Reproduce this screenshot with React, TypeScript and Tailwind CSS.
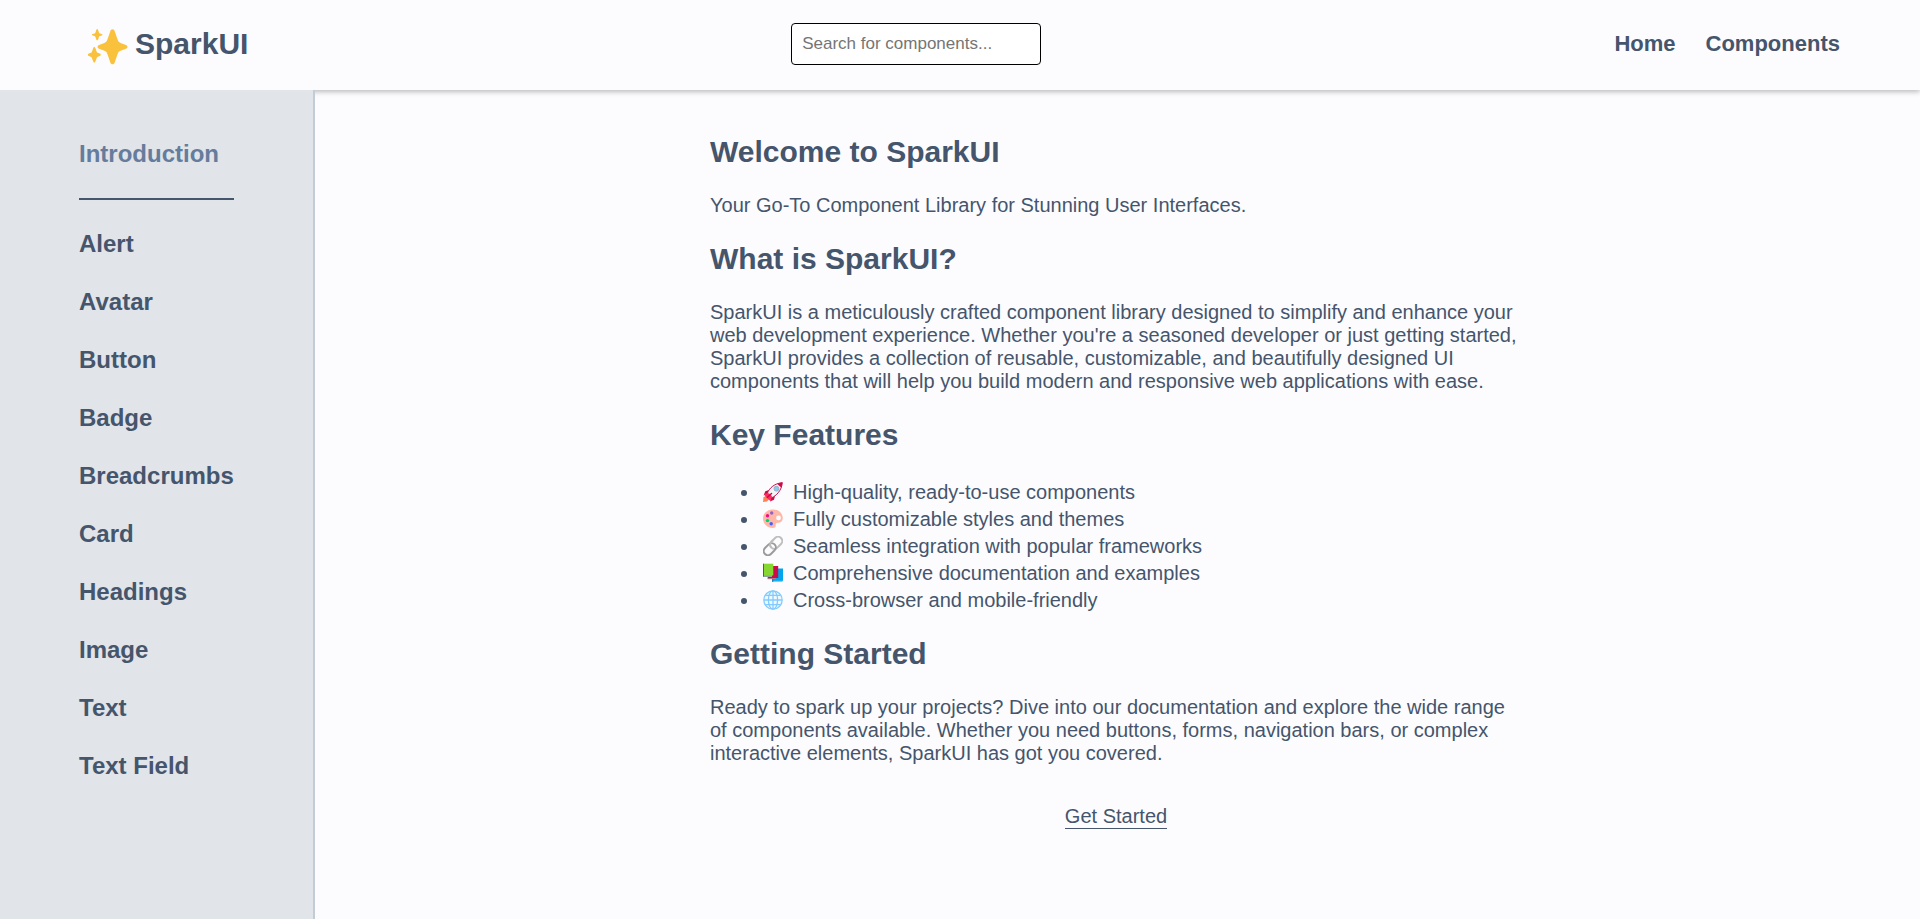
import React from "react";

const components = [
  "Alert",
  "Avatar",
  "Button",
  "Badge",
  "Breadcrumbs",
  "Card",
  "Headings",
  "Image",
  "Text",
  "Text Field",
];

function Sparkles() {
  return (
    <svg className="mt-1.5 h-9 w-10" viewBox="0 0 40 36" fill="#fac23c" aria-hidden="true">
      <path d="M24.5 0.3C25.6 0.3 26.3 1 26.7 2.2L29.6 10.6C30.3 12.6 31 13.3 32.6 13.9L38 15.9C40 16.7 40 19 38 19.7L32.6 21.7C31 22.3 30.3 23 29.6 25L26.7 33.4C26 35.8 23 35.8 22.3 33.4L19.4 25C18.7 23 18 22.3 16.4 21.7L11 19.7C9 19 9 16.7 11 15.9L16.4 13.9C18 13.3 18.7 12.6 19.4 10.6L22.3 2.2C22.7 1 23.4 0.3 24.5 0.3Z" />
      <path d="M9.2 0C9.7 0 9.9 0.4 10 0.8L11 3.4C11.2 4 11.4 4.2 12 4.4L13.8 5.1C14.6 5.4 14.6 6.1 13.8 6.4L12 7.1C11.4 7.3 11.2 7.5 11 8.1L10 10.7C9.8 11.5 8.6 11.5 8.4 10.7L7.4 8.1C7.2 7.5 7 7.3 6.4 7.1L4.6 6.4C3.8 6.1 3.8 5.4 4.6 5.1L6.4 4.4C7 4.2 7.2 4 7.4 3.4L8.4 0.8C8.5 0.4 8.7 0 9.2 0Z" />
      <path d="M6.3 18C6.8 18 7.2 18.4 7.4 19L8.6 22.4C8.9 23.2 9.2 23.5 9.9 23.8L12.2 24.8C13 25.2 13 26.4 12.2 26.8L9.9 27.8C9.2 28.1 8.9 28.4 8.6 29.2L7.4 32.6C7 34 5.6 34 5.2 32.6L4 29.2C3.7 28.4 3.4 28.1 2.7 27.8L0.4 26.8C-0.4 26.4-0.4 25.2 0.4 24.8L2.7 23.8C3.4 23.5 3.7 23.2 4 22.4L5.2 19C5.4 18.4 5.8 18 6.3 18Z" />
    </svg>
  );
}

function Rocket() {
  return (
    <svg className="size-5" viewBox="0 0 20 20" aria-hidden="true">
      <path d="M0.5 15L4 14L6 17.5L4 19.5L0 20Z" fill="#ff8257" />
      <path d="M6 8L2.3 9.2L0.6 13.5L4.2 12Z" fill="#ca0b4a" />
      <path d="M12 14L11 17.8L7 19.5L8 15.8Z" fill="#ca0b4a" />
      <path d="M4.3 11.5C6 6.5 11 1.5 19.2 0.7C18.8 8.5 13 14 8.6 15.8Z" fill="#f4f4f4" stroke="#ca0b4a" strokeWidth="1" />
      <path d="M14.5 1.7L19.6 0.3L18.5 5.4C17 4.7 15.7 3.5 14.5 1.7Z" fill="#ca0b4a" />
      <path d="M1.2 11.8L6 11.2L9 14.2L7.5 19L5 17L2.5 14.8Z" fill="#f92f60" />
      <path d="M4.5 15.2L8.5 11.5" stroke="#ca0b4a" strokeWidth="1.5" strokeLinecap="round" />
      <circle cx="13.4" cy="6.7" r="2.4" fill="#83cbff" stroke="#9aa8b6" strokeWidth="0.9" />
    </svg>
  );
}

function Palette() {
  return (
    <svg className="size-5" viewBox="0 0 20 20" aria-hidden="true">
      <path
        fillRule="evenodd"
        d="M9.5 0.5C4 0.8 0 4.5 0 9.5C0 15 4.5 19 9.7 19C12 19 13 18 12.7 16.3C12.4 14.5 13.5 13.8 15 13.8C18.5 13.8 19.8 11.5 19.8 8.8C19.5 3.7 15 0.2 9.5 0.5ZM15.5 6.5A2.4 2.4 0 1 1 15.5 11.3A2.4 2.4 0 1 1 15.5 6.5Z"
        fill="#ffb8a8"
      />
      <circle cx="8.7" cy="4" r="1.7" fill="#8d65c5" />
      <circle cx="4.5" cy="6.7" r="1.7" fill="#f70a8d" />
      <circle cx="4.5" cy="11.6" r="1.7" fill="#00d26a" />
      <circle cx="8.2" cy="14.8" r="1.7" fill="#3f5fff" />
    </svg>
  );
}

function LinkEmoji() {
  return (
    <svg className="size-5" viewBox="0 0 20 20" fill="none" strokeWidth="2" aria-hidden="true">
      <rect x="-6.8" y="-4.2" width="13.6" height="8.4" rx="4.2" transform="translate(13.2 6.8) rotate(-45)" stroke="#bebebe" />
      <rect x="-6.8" y="-4.2" width="13.6" height="8.4" rx="4.2" transform="translate(6.8 13.2) rotate(-45)" stroke="#9b9b9b" />
      <path d="M8.4 11.6C6.8 10 6.8 7.4 8.4 5.7L10 4.2" stroke="#bebebe" />
    </svg>
  );
}

function Books() {
  return (
    <svg className="size-5" viewBox="0 0 20 20" aria-hidden="true">
      <path d="M10 17L19.5 15.5V19H10Z" fill="#83cbff" />
      <path d="M9.2 5.5H20V17.8H9.2Z" fill="#00a6ed" />
      <path d="M9.2 5.5H10.2V19H9.2Z" fill="#0074ba" />
      <path d="M4.5 13H13V16.2H4.5Z" fill="#b4788c" />
      <path d="M5 3L15.2 3V15L5 15Z" fill="#ca0b4a" />
      <path d="M0.5 12H9V14H1Z" fill="#8ea39a" />
      <path d="M0 0.7H10.3V12.5H0Z" fill="#86d72f" />
      <path d="M0 0.7H1V13.8H0Z" fill="#008463" />
    </svg>
  );
}

function Globe() {
  return (
    <svg className="size-5" viewBox="0 0 20 20" fill="none" stroke="#83cbff" strokeWidth="1.3" aria-hidden="true">
      <circle cx="10" cy="10" r="9.2" fill="#eef8ff" />
      <ellipse cx="10" cy="10" rx="4.6" ry="9.2" />
      <path d="M10 1V19M1 10H19M2.5 5.3H17.5M2.5 14.7H17.5" />
    </svg>
  );
}

const features = [
  { icon: <Rocket />, text: "High-quality, ready-to-use components" },
  { icon: <Palette />, text: "Fully customizable styles and themes" },
  { icon: <LinkEmoji />, text: "Seamless integration with popular frameworks" },
  { icon: <Books />, text: "Comprehensive documentation and examples" },
  { icon: <Globe />, text: "Cross-browser and mobile-friendly" },
];

function Heading({ children }: { children: React.ReactNode }) {
  return <h2 className="text-[30px] leading-[34px] font-bold">{children}</h2>;
}

export default function App() {
  return (
    <div className="flex min-h-screen flex-col bg-[#fcfcfe] font-['Liberation_Sans',Arial,sans-serif] text-slate-600">
      <header className="flex h-[90px] items-center pr-20 pb-0.5 shadow-[0_2px_5px_rgba(0,0,0,0.25)]">
        <div className="w-[43%] pl-[88px]">
          <a href="#home" className="flex w-fit items-center gap-[7px] text-[30px] leading-[34px] font-bold">
            <Sparkles />
            SparkUI
          </a>
        </div>
        <input
          type="search"
          aria-label="Search for components"
          placeholder="Search for components..."
          className="h-[42px] w-[250px] rounded border border-black bg-white px-2.5 text-[17px] placeholder:text-[#757575]"
        />
        <nav className="ml-auto flex gap-[30px] text-[22px] leading-[26px] font-bold">
          <a href="#home">Home</a>
          <a href="#components">Components</a>
        </nav>
      </header>

      <div className="flex grow">
        <aside className="relative w-[315px] shrink-0 border-r-2 border-[#c2ccd6] bg-[#e1e4e9] pt-[50px] pl-[79px]">
          <nav className="flex w-fit flex-col text-2xl leading-[27px] font-bold">
            <a href="#introduction" className="text-[#667c9c]">
              Introduction
            </a>
            <hr className="mt-[31px] mb-[30px] border-t-2 border-slate-600" />
            <ul className="flex flex-col gap-[31px]">
              {components.map((name) => (
                <li key={name}>
                  <a href="#components">{name}</a>
                </li>
              ))}
            </ul>
          </nav>
        </aside>

        <main className="grow px-2 pt-[45px] pr-[11px]">
          <article className="mx-auto flex max-w-[812px] flex-col gap-[25px] text-xl leading-[23px]">
            <Heading>Welcome to SparkUI</Heading>
            <p>Your Go-To Component Library for Stunning User Interfaces.</p>
            <Heading>What is SparkUI?</Heading>
            <p>
              SparkUI is a meticulously crafted component library designed to simplify and enhance your web
              development experience. Whether you're a seasoned developer or just getting started, SparkUI
              provides a collection of reusable, customizable, and beautifully designed UI components that will
              help you build modern and responsive web applications with ease.
            </p>
            <Heading>Key Features</Heading>
            <ul className="-mb-0.5 list-disc pt-0.5 pl-[50px] leading-[27px]">
              {features.map(({ icon, text }) => (
                <li key={text}>
                  <span className="mr-2.5 ml-[3px] inline-block align-[-3px]">{icon}</span>
                  {text}
                </li>
              ))}
            </ul>
            <Heading>Getting Started</Heading>
            <p>
              Ready to spark up your projects? Dive into our documentation and explore the wide range of
              components available. Whether you need buttons, forms, navigation bars, or complex interactive
              elements, SparkUI has got you covered.
            </p>
            <a href="#components" className="mt-[15px] self-center border-b border-slate-600">
              Get Started
            </a>
          </article>
        </main>
      </div>
    </div>
  );
}
